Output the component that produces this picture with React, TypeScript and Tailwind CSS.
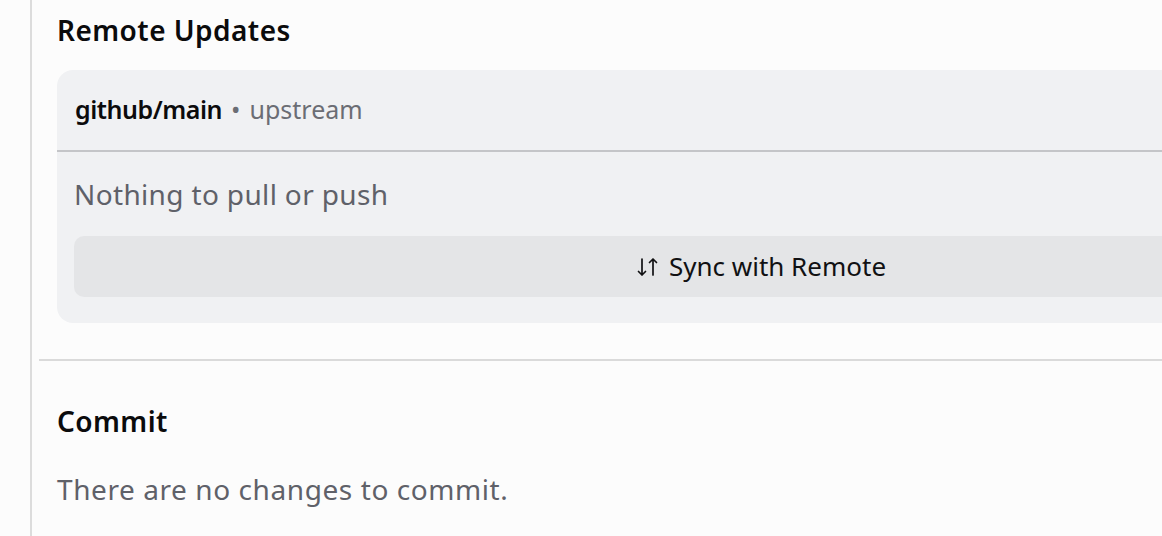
import React from "react";

function SyncIcon() {
  return (
    <svg
      width="24"
      height="22"
      viewBox="0 0 24 22"
      fill="none"
      stroke="currentColor"
      strokeWidth="1.7"
      strokeLinecap="round"
      strokeLinejoin="round"
      className="mr-[9px]"
    >
      <path d="M6 3v16M2.5 15.5 6 19l3.5-3.5" />
      <path d="M17 19V3M13.5 6.5 17 3l3.5 3.5" />
    </svg>
  );
}

export default function App() {
  const font = { fontFamily: '"Noto Sans", "Open Sans", sans-serif' };
  return (
    <div
      className="flex h-[536px] w-[1162px] overflow-hidden bg-[#fcfcfc] text-[#0b0b0c]"
      style={font}
    >
      <div className="w-[30px] shrink-0" />
      <div className="w-[2px] shrink-0 bg-[#dcdcdc]" />
      <div className="min-w-0 flex-1">
        <section className="pl-[25px] pt-[12px]">
          <h2 className="h-[36px] text-[28px] font-semibold leading-[36px] tracking-[0.45px] whitespace-nowrap">
            Remote Updates
          </h2>
          <div className="mt-[22px] w-[1408px] rounded-[16px] bg-[#f0f1f3]">
            <div className="flex h-[82px] items-center border-b-2 border-[#c4c5c8] px-[18px] text-[25px] whitespace-nowrap">
              <span className="font-semibold tracking-[-0.45px]">github/main</span>
              <span className="mx-[9px] text-[#6b6d74]">•</span>
              <span className="text-[#6b6d74]">upstream</span>
            </div>
            <div className="px-[17px] pb-[26px] pt-[24px]">
              <p className="h-[36px] text-[28px] leading-[36px] tracking-[0.35px] text-[#5f6169] whitespace-nowrap">
                Nothing to pull or push
              </p>
              <button className="mt-[24px] flex h-[61px] w-full items-center justify-center rounded-[10px] bg-[#e4e5e7] text-[26px] text-[#111113] whitespace-nowrap">
                <SyncIcon />
                Sync with Remote
              </button>
            </div>
          </div>
        </section>
        <div className="ml-[7px] mt-[36px] h-[2px] bg-[#dadada]" />
        <section className="pl-[25px] pt-[42px]">
          <h2 className="h-[36px] text-[28px] font-semibold leading-[36px] tracking-[0.45px] whitespace-nowrap">
            Commit
          </h2>
          <p className="mt-[32px] h-[36px] text-[28px] leading-[36px] tracking-[0.58px] text-[#5f6169] whitespace-nowrap">
            There are no changes to commit.
          </p>
        </section>
      </div>
    </div>
  );
}
